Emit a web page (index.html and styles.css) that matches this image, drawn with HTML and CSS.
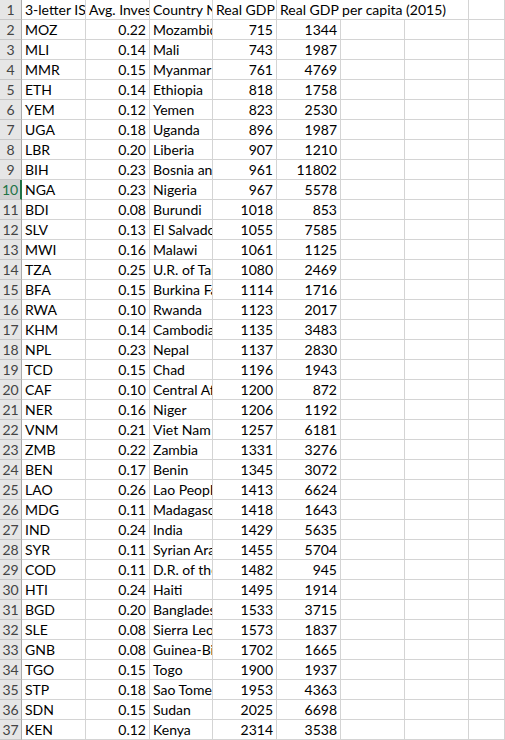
FILE: index.html
```html
<!DOCTYPE html>
<html>
<head>
<meta charset="utf-8">
<link rel="stylesheet" href="styles.css">
</head>
<body>
<div class="sheet">
  <div class="row"><div class="rh">1</div><div class="c t">3-letter ISO code</div><div class="c t">Avg. Investment share</div><div class="c t">Country Name</div><div class="c t">Real GDP per capita (1960)</div><div class="c t wide">Real GDP per capita (2015)</div><div class="c"></div></div>
  <div class="row"><div class="rh">2</div><div class="c t">MOZ</div><div class="c n">0.22</div><div class="c t">Mozambique</div><div class="c n">715</div><div class="c n">1344</div><div class="c"></div><div class="c"></div><div class="c"></div></div>
  <div class="row"><div class="rh">3</div><div class="c t">MLI</div><div class="c n">0.14</div><div class="c t">Mali</div><div class="c n">743</div><div class="c n">1987</div><div class="c"></div><div class="c"></div><div class="c"></div></div>
  <div class="row"><div class="rh">4</div><div class="c t">MMR</div><div class="c n">0.15</div><div class="c t">Myanmar</div><div class="c n">761</div><div class="c n">4769</div><div class="c"></div><div class="c"></div><div class="c"></div></div>
  <div class="row"><div class="rh">5</div><div class="c t">ETH</div><div class="c n">0.14</div><div class="c t">Ethiopia</div><div class="c n">818</div><div class="c n">1758</div><div class="c"></div><div class="c"></div><div class="c"></div></div>
  <div class="row"><div class="rh">6</div><div class="c t">YEM</div><div class="c n">0.12</div><div class="c t">Yemen</div><div class="c n">823</div><div class="c n">2530</div><div class="c"></div><div class="c"></div><div class="c"></div></div>
  <div class="row"><div class="rh">7</div><div class="c t">UGA</div><div class="c n">0.18</div><div class="c t">Uganda</div><div class="c n">896</div><div class="c n">1987</div><div class="c"></div><div class="c"></div><div class="c"></div></div>
  <div class="row"><div class="rh">8</div><div class="c t">LBR</div><div class="c n">0.20</div><div class="c t">Liberia</div><div class="c n">907</div><div class="c n">1210</div><div class="c"></div><div class="c"></div><div class="c"></div></div>
  <div class="row"><div class="rh">9</div><div class="c t">BIH</div><div class="c n">0.23</div><div class="c t">Bosnia and Herzegovina</div><div class="c n">961</div><div class="c n">11802</div><div class="c"></div><div class="c"></div><div class="c"></div></div>
  <div class="row"><div class="rh sel">10</div><div class="c t">NGA</div><div class="c n">0.23</div><div class="c t">Nigeria</div><div class="c n">967</div><div class="c n">5578</div><div class="c"></div><div class="c"></div><div class="c"></div></div>
  <div class="row"><div class="rh">11</div><div class="c t">BDI</div><div class="c n">0.08</div><div class="c t">Burundi</div><div class="c n">1018</div><div class="c n">853</div><div class="c"></div><div class="c"></div><div class="c"></div></div>
  <div class="row"><div class="rh">12</div><div class="c t">SLV</div><div class="c n">0.13</div><div class="c t">El Salvador</div><div class="c n">1055</div><div class="c n">7585</div><div class="c"></div><div class="c"></div><div class="c"></div></div>
  <div class="row"><div class="rh">13</div><div class="c t">MWI</div><div class="c n">0.16</div><div class="c t">Malawi</div><div class="c n">1061</div><div class="c n">1125</div><div class="c"></div><div class="c"></div><div class="c"></div></div>
  <div class="row"><div class="rh">14</div><div class="c t">TZA</div><div class="c n">0.25</div><div class="c t">U.R. of Tanzania</div><div class="c n">1080</div><div class="c n">2469</div><div class="c"></div><div class="c"></div><div class="c"></div></div>
  <div class="row"><div class="rh">15</div><div class="c t">BFA</div><div class="c n">0.15</div><div class="c t">Burkina Faso</div><div class="c n">1114</div><div class="c n">1716</div><div class="c"></div><div class="c"></div><div class="c"></div></div>
  <div class="row"><div class="rh">16</div><div class="c t">RWA</div><div class="c n">0.10</div><div class="c t">Rwanda</div><div class="c n">1123</div><div class="c n">2017</div><div class="c"></div><div class="c"></div><div class="c"></div></div>
  <div class="row"><div class="rh">17</div><div class="c t">KHM</div><div class="c n">0.14</div><div class="c t">Cambodia</div><div class="c n">1135</div><div class="c n">3483</div><div class="c"></div><div class="c"></div><div class="c"></div></div>
  <div class="row"><div class="rh">18</div><div class="c t">NPL</div><div class="c n">0.23</div><div class="c t">Nepal</div><div class="c n">1137</div><div class="c n">2830</div><div class="c"></div><div class="c"></div><div class="c"></div></div>
  <div class="row"><div class="rh">19</div><div class="c t">TCD</div><div class="c n">0.15</div><div class="c t">Chad</div><div class="c n">1196</div><div class="c n">1943</div><div class="c"></div><div class="c"></div><div class="c"></div></div>
  <div class="row"><div class="rh">20</div><div class="c t">CAF</div><div class="c n">0.10</div><div class="c t">Central African Republic</div><div class="c n">1200</div><div class="c n">872</div><div class="c"></div><div class="c"></div><div class="c"></div></div>
  <div class="row"><div class="rh">21</div><div class="c t">NER</div><div class="c n">0.16</div><div class="c t">Niger</div><div class="c n">1206</div><div class="c n">1192</div><div class="c"></div><div class="c"></div><div class="c"></div></div>
  <div class="row"><div class="rh">22</div><div class="c t">VNM</div><div class="c n">0.21</div><div class="c t">Viet Nam</div><div class="c n">1257</div><div class="c n">6181</div><div class="c"></div><div class="c"></div><div class="c"></div></div>
  <div class="row"><div class="rh">23</div><div class="c t">ZMB</div><div class="c n">0.22</div><div class="c t">Zambia</div><div class="c n">1331</div><div class="c n">3276</div><div class="c"></div><div class="c"></div><div class="c"></div></div>
  <div class="row"><div class="rh">24</div><div class="c t">BEN</div><div class="c n">0.17</div><div class="c t">Benin</div><div class="c n">1345</div><div class="c n">3072</div><div class="c"></div><div class="c"></div><div class="c"></div></div>
  <div class="row"><div class="rh">25</div><div class="c t">LAO</div><div class="c n">0.26</div><div class="c t">Lao People's DR</div><div class="c n">1413</div><div class="c n">6624</div><div class="c"></div><div class="c"></div><div class="c"></div></div>
  <div class="row"><div class="rh">26</div><div class="c t">MDG</div><div class="c n">0.11</div><div class="c t">Madagascar</div><div class="c n">1418</div><div class="c n">1643</div><div class="c"></div><div class="c"></div><div class="c"></div></div>
  <div class="row"><div class="rh">27</div><div class="c t">IND</div><div class="c n">0.24</div><div class="c t">India</div><div class="c n">1429</div><div class="c n">5635</div><div class="c"></div><div class="c"></div><div class="c"></div></div>
  <div class="row"><div class="rh">28</div><div class="c t">SYR</div><div class="c n">0.11</div><div class="c t">Syrian Arab Republic</div><div class="c n">1455</div><div class="c n">5704</div><div class="c"></div><div class="c"></div><div class="c"></div></div>
  <div class="row"><div class="rh">29</div><div class="c t">COD</div><div class="c n">0.11</div><div class="c t">D.R. of the Congo</div><div class="c n">1482</div><div class="c n">945</div><div class="c"></div><div class="c"></div><div class="c"></div></div>
  <div class="row"><div class="rh">30</div><div class="c t">HTI</div><div class="c n">0.24</div><div class="c t">Haiti</div><div class="c n">1495</div><div class="c n">1914</div><div class="c"></div><div class="c"></div><div class="c"></div></div>
  <div class="row"><div class="rh">31</div><div class="c t">BGD</div><div class="c n">0.20</div><div class="c t">Bangladesh</div><div class="c n">1533</div><div class="c n">3715</div><div class="c"></div><div class="c"></div><div class="c"></div></div>
  <div class="row"><div class="rh">32</div><div class="c t">SLE</div><div class="c n">0.08</div><div class="c t">Sierra Leone</div><div class="c n">1573</div><div class="c n">1837</div><div class="c"></div><div class="c"></div><div class="c"></div></div>
  <div class="row"><div class="rh">33</div><div class="c t">GNB</div><div class="c n">0.08</div><div class="c t">Guinea-Bissau</div><div class="c n">1702</div><div class="c n">1665</div><div class="c"></div><div class="c"></div><div class="c"></div></div>
  <div class="row"><div class="rh">34</div><div class="c t">TGO</div><div class="c n">0.15</div><div class="c t">Togo</div><div class="c n">1900</div><div class="c n">1937</div><div class="c"></div><div class="c"></div><div class="c"></div></div>
  <div class="row"><div class="rh">35</div><div class="c t">STP</div><div class="c n">0.18</div><div class="c t">Sao Tome and Principe</div><div class="c n">1953</div><div class="c n">4363</div><div class="c"></div><div class="c"></div><div class="c"></div></div>
  <div class="row"><div class="rh">36</div><div class="c t">SDN</div><div class="c n">0.15</div><div class="c t">Sudan</div><div class="c n">2025</div><div class="c n">6698</div><div class="c"></div><div class="c"></div><div class="c"></div></div>
  <div class="row"><div class="rh">37</div><div class="c t">KEN</div><div class="c n">0.12</div><div class="c t">Kenya</div><div class="c n">2314</div><div class="c n">3538</div><div class="c"></div><div class="c"></div><div class="c"></div></div>
</div>
</body>
</html>
```

FILE: styles.css
```css
html, body {
  margin: 0;
  padding: 0;
  background: #ffffff;
}
body {
  width: 505px;
  overflow: hidden;
  font-family: Lato, "Open Sans", "Liberation Sans", sans-serif;
  font-size: 14px;
  color: #000000;
}
.sheet {
  display: flex;
  flex-direction: column;
}
.row {
  display: grid;
  grid-template-columns: 22px 64px 64px 63px 64px 64px 64px 64px 1fr;
  height: 20px;
}
.row > div {
  box-sizing: border-box;
  height: 20px;
  border-right: 1px solid #d4d4d4;
  border-bottom: 1px solid #d4d4d4;
  white-space: nowrap;
  overflow: hidden;
  line-height: 20px;
}
.row > .rh {
  background: #e6e6e6;
  color: #444444;
  text-align: center;
  border-right: 1px solid #ababab;
  border-bottom: 1px solid #c8c8c8;
  font-size: 14px;
}
.row > .rh.sel {
  background: #d2d2d2;
  color: #217346;
  border-right: 2px solid #217346;
}
.t {
  padding-left: 3px;
}
.n {
  text-align: right;
  padding-right: 3px;
}
.row > .wide {
  grid-column: span 3;
  overflow: visible;
}
```
